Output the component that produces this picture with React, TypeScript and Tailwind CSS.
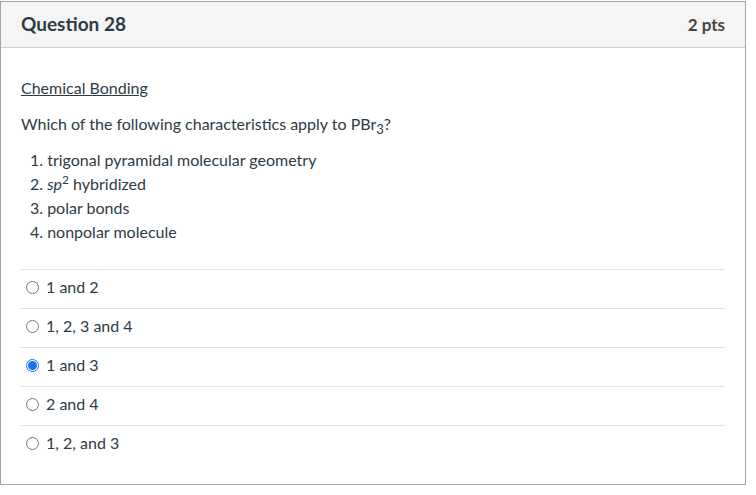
const items = [
  <>trigonal pyramidal molecular geometry</>,
  <>
    <em>sp</em>
    <sup className="text-[12px] -top-[6px]">2</sup> hybridized
  </>,
  <>polar bonds</>,
  <>nonpolar molecule</>,
];

const answers = ["1 and 2", "1, 2, 3 and 4", "1 and 3", "2 and 4", "1, 2, and 3"];

export default function App() {
  const selected = 2;
  return (
    <div
      className="w-[756px] h-[495px] bg-white pt-px text-[#2d3b45]"
      style={{ fontFamily: "Lato, 'Open Sans', sans-serif" }}
    >
      <div className="w-[746px] h-[484px] border border-[#a5a5a5] flex flex-col">
        {/* Header */}
        <div className="h-[46px] shrink-0 bg-[#f5f5f5] border-b border-[#c7cdd1] flex items-center justify-between pl-5 pr-5">
          <h2 className="text-[19px] font-bold">Question 28</h2>
          <span className="text-[17px] font-bold text-[#444]">2 pts</span>
        </div>

        {/* Body */}
        <div className="px-5 pt-[28px] text-[16px]">
          <p className="underline leading-[24px]">Chemical Bonding</p>
          <p className="mt-[12px] leading-[24px]">
            Which of the following characteristics apply to PBr
            <sub className="text-[13px] -bottom-[4px]">3</sub>?
          </p>
          <ol className="mt-[12px] pl-[9px]">
            {items.map((it, i) => (
              <li key={i} className="leading-[24px]">
                {i + 1}. {it}
              </li>
            ))}
          </ol>

          <div className="mt-[25px]">
            {answers.map((a, i) => (
              <div
                key={a}
                className="h-[39px] pb-[4px] border-t border-[#dfe2e4] flex items-center"
              >
                <span
                  className={
                    "ml-[5px] w-[13px] h-[13px] rounded-full border flex items-center justify-center " +
                    (i === selected
                      ? "border-[#1a73e8]"
                      : "border-[#767676]")
                  }
                >
                  {i === selected && (
                    <span className="w-[9px] h-[9px] rounded-full bg-[#1a73e8] block" />
                  )}
                </span>
                <span className="ml-[7px]">{a}</span>
              </div>
            ))}
          </div>
        </div>
      </div>
    </div>
  );
}
